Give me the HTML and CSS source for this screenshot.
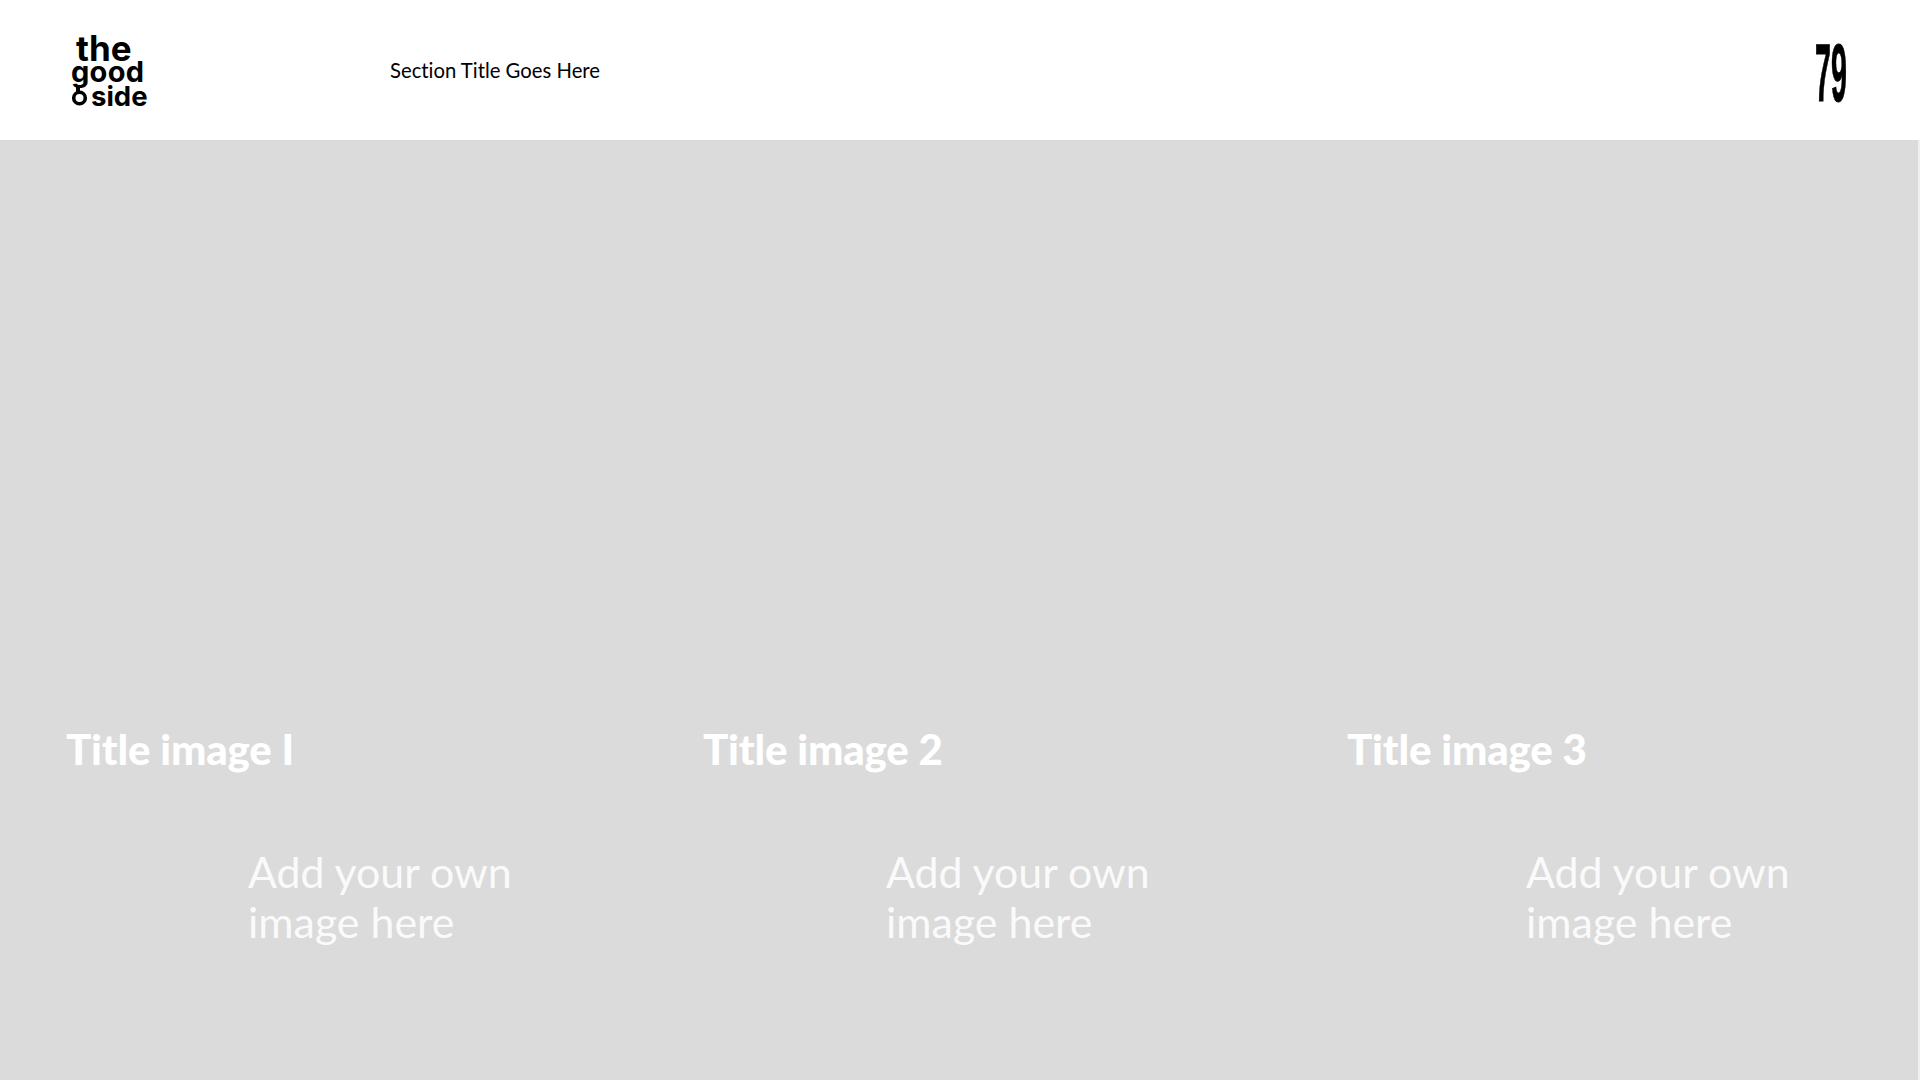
FILE: index.html
```html
<!DOCTYPE html>
<html lang="en">
<head>
<meta charset="utf-8">
<title>Section Title Goes Here</title>
<link rel="stylesheet" href="styles.css">
</head>
<body>
<header class="top">
  <svg class="logo" viewBox="0 0 80 80" width="80" height="80" role="img" aria-label="the good side">
    <text class="logo-the" x="6" y="31">the</text>
    <text class="logo-good" x="1" y="52">good</text>
    <rect x="6" y="55" width="4" height="7"></rect>
    <circle cx="9.5" cy="68" r="5.8"></circle>
    <text class="logo-side" x="21" y="76">side</text>
  </svg>
  <div class="section">Section Title Goes Here</div>
  <div class="page"><span class="page-num">79</span></div>
</header>
<main class="stage">
  <section class="col col-1">
    <h2 class="title">Title image I</h2>
    <p class="cap">Add your own<br>image here</p>
  </section>
  <section class="col col-2">
    <h2 class="title">Title image 2</h2>
    <p class="cap">Add your own<br>image here</p>
  </section>
  <section class="col col-3">
    <h2 class="title">Title image 3</h2>
    <p class="cap">Add your own<br>image here</p>
  </section>
</main>
</body>
</html>
```
FILE: styles.css
```css
* { box-sizing: border-box; }
html, body { margin: 0; height: 100%; }
body {
  width: 1920px;
  height: 1080px;
  overflow: hidden;
  background: #fff;
  color: #000;
  font-family: Lato, "Noto Sans", sans-serif;
  font-variant-ligatures: none;
  display: flex;
  flex-direction: column;
}
.top {
  height: 140px;
  flex: none;
  display: flex;
  align-items: center;
  padding-left: 70px;
}
.logo {
  flex: none;
  margin-right: 240px;
  overflow: visible;
  font-family: Inter, sans-serif;
  font-weight: 700;
}
.logo-the { font-size: 35px; }
.logo-good { font-size: 29px; letter-spacing: .3px; }
.logo-side { font-size: 27.5px; }
.logo circle { fill: none; stroke: #000; stroke-width: 3.6; }
.section {
  font-size: 20.3px;
  line-height: 28px;
  white-space: nowrap;
}
.page {
  margin-left: auto;
  margin-top: 6px;
  width: 105px;
  flex: none;
}
.page-num {
  display: inline-block;
  font-family: "Liberation Sans", sans-serif;
  font-weight: 700;
  font-size: 82px;
  line-height: 82px;
  transform: scaleX(.35);
  transform-origin: 0 50%;
  -webkit-text-stroke: 1px #000;
}
.stage {
  flex: 1;
  background: #dbdbdb;
  border-right: 2px solid #f0f0f0;
  display: grid;
  grid-template-columns: 637px 644px 1fr;
  padding: 584px 0 0 66px;
  color: #fff;
}
.col { min-width: 0; }
.title {
  margin: 0;
  font-size: 42px;
  line-height: 50px;
  font-weight: 900;
  letter-spacing: -.15px;
  white-space: nowrap;
}
.cap {
  margin: 73px 0 0 182px;
  font-size: 42.9px;
  line-height: 50px;
  font-weight: 400;
  color: #fafafa;
  white-space: nowrap;
}
.col-2 .cap { margin-left: 183px; }
.col-3 .cap { margin-left: 179px; }
```
